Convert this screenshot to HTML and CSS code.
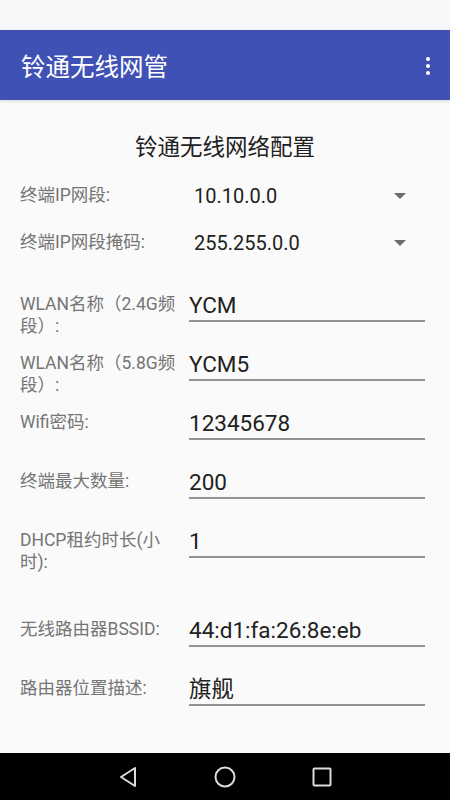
FILE: index.html
```html
<!DOCTYPE html>
<html lang="zh-CN">
<head>
    <meta charset="UTF-8">
    <meta name="viewport" content="width=device-width, initial-scale=1.0">
    <title>铃通无线网管</title>
    <link rel="stylesheet" href="styles.css">
</head>
<body>
    <div class="status-bar"></div>

    <div class="app-bar">
        <span class="app-title">铃通无线网管</span>
        <span class="menu-dots"><i></i><i></i><i></i></span>
    </div>

    <div class="content">
        <h1 class="form-title">铃通无线网络配置</h1>

        <div class="spin-row">
            <span class="label">终端IP网段:</span>
            <div class="spinner">
                <span>10.10.0.0</span>
                <span class="arrow"></span>
            </div>
        </div>
        <div class="spin-row">
            <span class="label">终端IP网段掩码:</span>
            <div class="spinner">
                <span>255.255.0.0</span>
                <span class="arrow"></span>
            </div>
        </div>

        <div class="edit-group">
            <div class="edit-row">
                <span class="label">WLAN名称（2.4G频段）:</span>
                <div class="edit">YCM</div>
            </div>
            <div class="edit-row">
                <span class="label">WLAN名称（5.8G频段）:</span>
                <div class="edit">YCM5</div>
            </div>
            <div class="edit-row">
                <span class="label">Wifi密码:</span>
                <div class="edit">12345678</div>
            </div>
            <div class="edit-row">
                <span class="label">终端最大数量:</span>
                <div class="edit">200</div>
            </div>
            <div class="edit-row">
                <span class="label">DHCP租约时长(小时):</span>
                <div class="edit">1</div>
            </div>
        </div>

        <div class="edit-group router">
            <div class="edit-row">
                <span class="label">无线路由器BSSID:</span>
                <div class="edit">44:d1:fa:26:8e:eb</div>
            </div>
            <div class="edit-row">
                <span class="label">路由器位置描述:</span>
                <div class="edit">旗舰</div>
            </div>
        </div>
    </div>

    <div class="nav-bar">
        <svg width="20" height="22" viewBox="0 0 20 22">
            <path d="M17 2 L3 11 L17 20 Z" fill="none" stroke="#dcdcdc" stroke-width="2" stroke-linejoin="round"/>
        </svg>
        <svg width="22" height="22" viewBox="0 0 22 22">
            <circle cx="11" cy="11" r="9.5" fill="none" stroke="#dcdcdc" stroke-width="2"/>
        </svg>
        <svg width="20" height="20" viewBox="0 0 20 20">
            <rect x="1.5" y="1.5" width="17" height="17" rx="1" fill="none" stroke="#dcdcdc" stroke-width="2"/>
        </svg>
    </div>
</body>
</html>
```

FILE: styles.css
```css
body {
    margin: 0;
    padding: 0;
    width: 450px;
    height: 800px;
    display: flex;
    flex-direction: column;
    background-color: #fafafa;
    font-family: Roboto, "Noto Sans CJK SC", sans-serif;
    overflow: hidden;
}

.status-bar {
    height: 30px;
    background-color: #f7f7fa;
}

.app-bar {
    height: 70px;
    background-color: #3f51b5;
    display: flex;
    align-items: center;
    justify-content: space-between;
    padding: 0 20px 0 21px;
    box-shadow: 0 1px 3px rgba(0, 0, 0, 0.15);
}

.app-title {
    color: #fff;
    font-size: 24.5px;
}

.menu-dots {
    display: flex;
    flex-direction: column;
    gap: 2.5px;
    padding-top: 2px;
}

.menu-dots i {
    display: block;
    width: 4.5px;
    height: 4.5px;
    border-radius: 50%;
    background-color: #fff;
}

.content {
    flex: 1;
    padding: 32px 25px 0 20px;
}

.form-title {
    margin: 0 0 10px 0;
    text-align: center;
    font-size: 22.5px;
    font-weight: normal;
    line-height: 30px;
    color: #212121;
    padding-left: 5px;
}

.label {
    width: 160px;
    flex: none;
    font-size: 17.5px;
    line-height: 21.5px;
    color: #757575;
}

.spin-row {
    height: 47px;
    display: flex;
    align-items: center;
}

.spinner {
    flex: 1;
    display: flex;
    align-items: center;
    justify-content: space-between;
    margin-left: 14px;
    padding-right: 19px;
    font-size: 20px;
    color: #212121;
}

.arrow {
    width: 0;
    height: 0;
    border-left: 6px solid transparent;
    border-right: 6px solid transparent;
    border-top: 6px solid #6b6b6b;
}

.edit-group {
    margin-top: 24px;
}

.edit-group.router {
    margin-top: 30px;
}

.edit-row {
    height: 59px;
    display: flex;
    align-items: flex-start;
}

.edit-row .label {
    padding-top: 4px;
}

.edit {
    flex: 1;
    margin-left: 9px;
    font-size: 22.5px;
    line-height: 30px;
    color: #212121;
    border-bottom: 2px solid #939393;
}

.nav-bar {
    height: 47px;
    background-color: #000;
    display: flex;
    align-items: center;
    justify-content: center;
    gap: 76px;
}
```
